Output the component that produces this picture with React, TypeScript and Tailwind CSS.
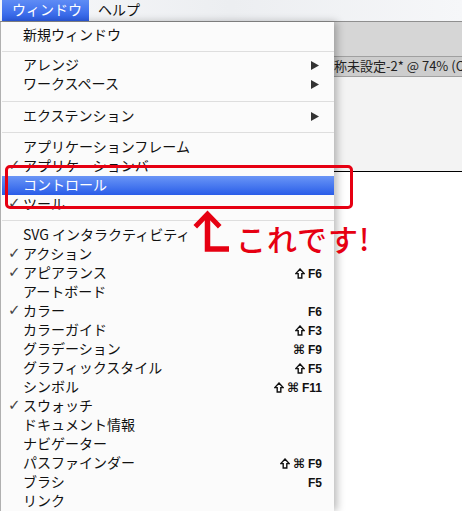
import React from "react";

type Row =
  | { sep: string }
  | { l: string; c?: boolean; k?: string; sub?: boolean; hl?: boolean };

const rows: Row[] = [
  { l: "新規ウィンドウ" },
  { sep: "h-[11px] pt-[6px]" },
  { l: "アレンジ", sub: true },
  { l: "ワークスペース", sub: true },
  { sep: "h-[13px] pt-[7px]" },
  { l: "エクステンション", sub: true },
  { sep: "h-[12px] pt-[6px]" },
  { l: "アプリケーションフレーム" },
  { l: "アプリケーションバー", c: true },
  { l: "コントロール", hl: true },
  { l: "ツール", c: true },
  { sep: "h-[12px] pt-[6px]" },
  { l: "SVG インタラクティビティ" },
  { l: "アクション", c: true },
  { l: "アピアランス", c: true, k: "s|F6" },
  { l: "アートボード" },
  { l: "カラー", c: true, k: "|F6" },
  { l: "カラーガイド", k: "s|F3" },
  { l: "グラデーション", k: "c|F9" },
  { l: "グラフィックスタイル", k: "s|F5" },
  { l: "シンボル", k: "sc|F11" },
  { l: "スウォッチ", c: true },
  { l: "ドキュメント情報" },
  { l: "ナビゲーター" },
  { l: "パスファインダー", k: "sc|F9" },
  { l: "ブラシ", k: "|F5" },
  { l: "リンク" },
];

function ShiftIcon() {
  return (
    <svg width="10" height="11" viewBox="0 0 10 11">
      <polygon
        points="5,1 9.2,5.6 6.8,5.6 6.8,10 3.2,10 3.2,5.6 0.8,5.6"
        fill="none"
        stroke="#111"
        strokeWidth="1.4"
        strokeLinejoin="miter"
      />
    </svg>
  );
}

function Shortcut({ k }: { k: string }) {
  const [mods, key] = k.split("|");
  return (
    <span className="flex items-center gap-[3px] pr-[12px] text-[#111]">
      {mods.includes("s") && <ShiftIcon />}
      {mods.includes("c") && (
        <span className="pb-[1px] font-['DejaVu_Sans',sans-serif] text-[13px] font-bold leading-none">⌘</span>
      )}
      <span className="font-['Liberation_Sans',sans-serif] text-[12px] font-bold leading-none">{key}</span>
    </span>
  );
}

function MenuRow({ row }: { row: Row }) {
  if ("sep" in row) {
    return (
      <div className={row.sep}>
        <div className="h-px bg-[#dedede]" />
      </div>
    );
  }
  return (
    <div
      className={
        row.hl
          ? "flex h-[19px] items-center bg-gradient-to-b from-[#6a95f6] to-[#2a5ce8] text-white"
          : "flex h-[19px] items-center text-[#111]"
      }
    >
      <span className="w-[21px] pl-[6px] pb-[2px] font-['DejaVu_Sans',sans-serif] text-[15px] leading-none text-[#444]">
        {row.c ? "✓" : ""}
      </span>
      <span className="flex-1 pb-[3px] text-[14px] leading-none">{row.l}</span>
      {row.k && <Shortcut k={row.k} />}
      {row.sub && (
        <svg width="8" height="9" viewBox="0 0 8 9" className="mr-[15px]">
          <polygon points="0,0 8,4.5 0,9" fill="#333" />
        </svg>
      )}
    </div>
  );
}

export default function App() {
  return (
    <div className="relative h-[511px] w-[462px] overflow-hidden bg-white font-['Noto_Sans_CJK_JP',sans-serif]">
      <div className="flex h-[22px] items-stretch border-b border-[#8f8f8f] bg-gradient-to-r from-[#f7f8fa] via-[#eceef1] to-[#f6f7f9] text-[14px]">
        <div className="ml-[2px] flex w-[87px] items-center bg-gradient-to-b from-[#5f8cf5] to-[#2c5de6] pl-[10px] pb-[2px] text-white">
          ウィンドウ
        </div>
        <div className="ml-[9px] flex items-center pb-[2px] text-[#111]">ヘルプ</div>
      </div>

      <div className="h-[34px] bg-[#d6d6d6]" />
      <div className="flex h-[21px] items-center overflow-hidden whitespace-nowrap border-y border-[#a0a0a0] bg-[#cdcdcd] pl-[321px] pb-[1px] text-[13px] text-[#222]">
        名称未設定-2* @ 74% (C
      </div>
      <div className="h-[95px] border-b border-black bg-[#f3f3f3]" />

      <div className="absolute left-0 top-[22px] w-[334px] border-l border-[#b0b0b0] bg-[#fbfbfb] pt-[4px] pl-px shadow-[3px_0_8px_rgba(0,0,0,0.28)]">
        {rows.map((r, i) => (
          <MenuRow key={i} row={r} />
        ))}
      </div>

      <div className="absolute left-[5px] top-[165px] h-[44px] w-[348px] rounded-[5px] border-[3px] border-[#e60012]" />

      <svg className="absolute left-0 top-0" width="462" height="511" viewBox="0 0 462 511">
        <polyline
          points="197,225 207.5,214 218,225"
          fill="none"
          stroke="#e60012"
          strokeWidth="5"
          strokeLinecap="square"
        />
        <polyline
          points="207.5,215 207.5,249 229,249"
          fill="none"
          stroke="#e60012"
          strokeWidth="5.5"
        />
      </svg>

      <div className="absolute left-[236px] top-[223px] text-[30px] font-medium leading-none tracking-[1px] text-[#e60012]">
        これです!
      </div>
    </div>
  );
}
